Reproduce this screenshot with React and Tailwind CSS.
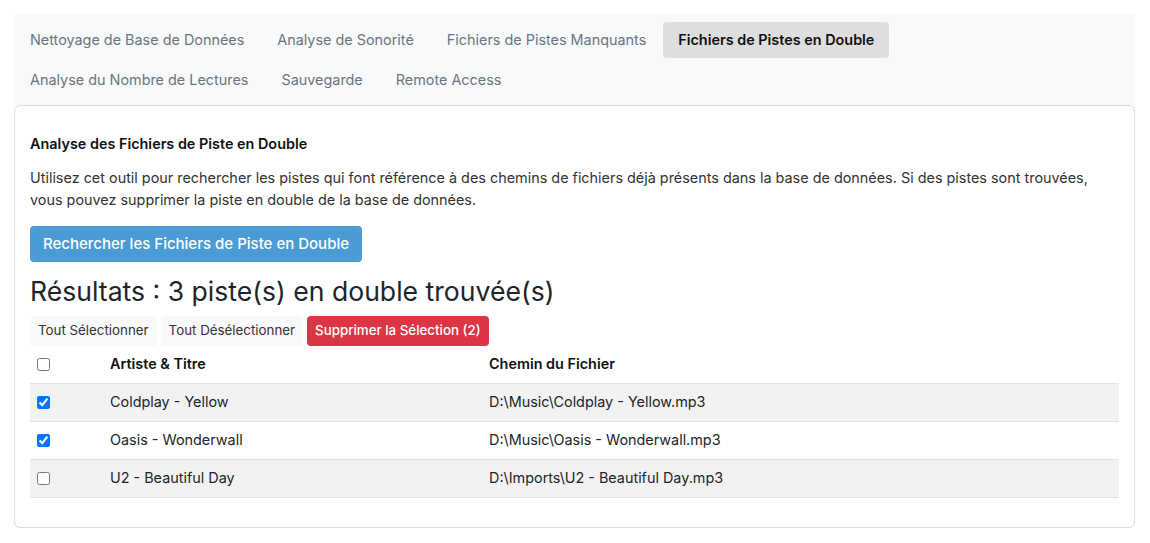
import React, { useState } from 'react';

const TABS = [
  ['Nettoyage de Base de Données', 'Analyse de Sonorité', 'Fichiers de Pistes Manquants', 'Fichiers de Pistes en Double'],
  ['Analyse du Nombre de Lectures', 'Sauvegarde', 'Remote Access'],
];

const ROWS = [
  { id: 1, title: 'Coldplay - Yellow', path: 'D:\\Music\\Coldplay - Yellow.mp3', checked: true },
  { id: 2, title: 'Oasis - Wonderwall', path: 'D:\\Music\\Oasis - Wonderwall.mp3', checked: true },
  { id: 3, title: 'U2 - Beautiful Day', path: 'D:\\Imports\\U2 - Beautiful Day.mp3', checked: false },
];

export default function App() {
  const [active, setActive] = useState('Fichiers de Pistes en Double');
  const [selected, setSelected] = useState(ROWS.filter(r => r.checked).map(r => r.id));

  const toggle = (id) => setSelected(prev => prev.includes(id) ? prev.filter(x => x !== id) : [...prev, id]);

  return (
    <div className="min-h-screen bg-white p-[14px] pr-[15px] font-['Inter',sans-serif] text-[#212529]">
      <div className="bg-[#f8f9fa] pt-2 pb-[7px] flex flex-col gap-1">
        {TABS.map((row, i) => (
          <div key={i} className="flex gap-[1px]">
            {row.map(t => (
              <button
                key={t}
                onClick={() => setActive(t)}
                className={
                  t === active
                    ? 'h-9 px-[15px] rounded text-[14.4px] font-semibold bg-[#dedede] text-[#111]'
                    : 'h-9 px-4 rounded text-[14.4px] text-[#6c757d]'
                }
              >
                {t}
              </button>
            ))}
          </div>
        ))}
      </div>

      <div className="border border-[#dcdcdc] rounded-md px-[15px] pt-[28px] pb-[29px]">
        <h3 className="text-[14.4px] font-semibold leading-5 text-[#111]">Analyse des Fichiers de Piste en Double</h3>
        <p className="mt-[13px] text-[14.4px] leading-[22px] text-[#333]">
          Utilisez cet outil pour rechercher les pistes qui font référence à des chemins de fichiers déjà présents dans la base de données. Si des pistes sont trouvées, vous pouvez supprimer la piste en double de la base de données.
        </p>
        <button className="mt-[15px] h-9 px-[13px] rounded bg-[#4a9bd6] text-white text-[15px] font-medium">
          Rechercher les Fichiers de Piste en Double
        </button>

        <h2 className="mt-[12px] text-[26.6px] leading-[34px] text-[#212529]">Résultats : 3 piste(s) en double trouvée(s)</h2>

        <div className="mt-[8px] flex gap-1">
          <button className="h-[30px] px-2 rounded bg-[#f8f9fa] text-[13.33px] text-[#333]">Tout Sélectionner</button>
          <button className="h-[30px] px-2 rounded bg-[#f8f9fa] text-[13.33px] text-[#333]">Tout Désélectionner</button>
          <button className="h-[30px] px-2 rounded bg-[#dc3545] text-[13.33px] font-medium text-white">
            Supprimer la Sélection ({selected.length})
          </button>
        </div>

        <table className="w-full border-collapse text-[14.4px]">
          <thead>
            <tr className="border-b border-[#dee2e6] h-[37px]">
              <th className="w-[72px] pl-[7px] text-left align-middle">
                <input type="checkbox" className="block w-[13px] h-[13px]" />
              </th>
              <th className="w-[379px] px-2 text-left font-semibold text-[14.4px] text-[#111]">Artiste &amp; Titre</th>
              <th className="px-2 text-left font-semibold text-[14.4px] text-[#111]">Chemin du Fichier</th>
            </tr>
          </thead>
          <tbody>
            {ROWS.map((r, i) => (
              <tr key={r.id} className={(i % 2 === 0 ? 'bg-[#f2f2f2] ' : '') + 'border-b border-[#dee2e6] h-[38px]'}>
                <td className="pl-[7px] align-middle">
                  <input
                    type="checkbox"
                    checked={selected.includes(r.id)}
                    onChange={() => toggle(r.id)}
                    className="block w-[13px] h-[13px] accent-[#0075ff]"
                  />
                </td>
                <td className="px-2 text-[#212529]">{r.title}</td>
                <td className="px-2 text-[#212529]">{r.path}</td>
              </tr>
            ))}
          </tbody>
        </table>
      </div>
    </div>
  );
}
